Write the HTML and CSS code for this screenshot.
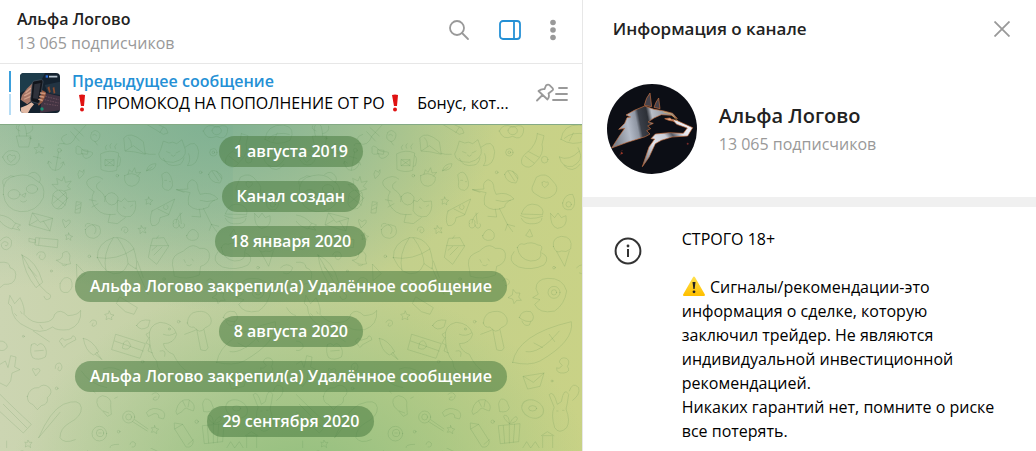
FILE: index.html
```html
<!DOCTYPE html>
<html lang="ru">
<head>
    <meta charset="UTF-8">
    <meta name="viewport" content="width=device-width, initial-scale=1.0">
    <title>Альфа Логово</title>
    <link rel="stylesheet" href="styles.css">
</head>
<body>

    <main class="chat">
        <header class="chat-header">
            <div class="chat-title">
                <h1>Альфа Логово</h1>
                <p class="subscribers">13 065 подписчиков</p>
            </div>
            <div class="chat-actions">
                <button type="button" aria-label="Поиск">
                    <svg width="22" height="22" viewBox="0 0 22 22" fill="none" stroke="#999" stroke-width="1.8" stroke-linecap="round">
                        <circle cx="9" cy="9" r="7"/>
                        <path d="M14 14L20 20"/>
                    </svg>
                </button>
                <button type="button" aria-label="Информация">
                    <svg width="24" height="22" viewBox="0 0 24 22" fill="none" stroke="#2490d5" stroke-width="1.8">
                        <rect x="2" y="2" width="20" height="18" rx="3"/>
                        <path d="M16 2V20"/>
                    </svg>
                </button>
                <button type="button" aria-label="Меню">
                    <svg width="6" height="22" viewBox="0 0 6 22" fill="#999">
                        <circle cx="3" cy="3.5" r="2.8"/>
                        <circle cx="3" cy="11" r="2.8"/>
                        <circle cx="3" cy="18.5" r="2.8"/>
                    </svg>
                </button>
            </div>
        </header>

        <section class="pinned">
            <div class="pinned-marks"><span class="active"></span><span></span></div>
            <svg class="pinned-thumb" width="40" height="40" viewBox="0 0 120 120">
                <rect width="120" height="120" fill="#14222f"/>
                <path d="M0 0H75L60 30L0 60Z" fill="#1d3c4b"/>
                <path d="M74 36L120 26V66L84 60Z" fill="#223443"/>
                <path d="M82 44L88 40L92 56L88 60ZM98 44L103 42L106 60L101 62Z" fill="#8b4c30"/>
                <path d="M68 58L120 70V112L60 120Z" fill="#433443"/>
                <path d="M76 70L116 80M74 80L116 90M72 92L114 98" stroke="#7b5b68" stroke-width="2" stroke-dasharray="5 3"/>
                <path d="M2 80L6 66L22 46L38 30L42 60L38 80L22 94Z" fill="#a87767"/>
                <path d="M18 58L32 46M14 68L32 58M14 78L32 70" stroke="#d2a28d" stroke-width="4" stroke-linecap="round"/>
                <path d="M2 104L22 96L34 88L42 94L32 106L24 120H4Z" fill="#e2b9a4"/>
                <path d="M52 90L58 66L64 50L78 58L76 70L68 86L56 98Z" fill="#96583f"/>
                <path d="M42 24L64 20Q70 20 69 27L59 86Q58 92 52 91L36 86Q31 84 32 78L37 30Q38 25 42 24Z" fill="#12151b" stroke="#4a5663" stroke-width="2"/>
                <path d="M43 34L62 30L54 78L39 76Z" fill="#2f323b"/>
                <path d="M62 60L74 62M60 70L70 72M57 79L66 82" stroke="#cf967c" stroke-width="5" stroke-linecap="round"/>
                <circle cx="66" cy="108" r="5" fill="#1b8e73"/>
                <rect x="77" y="7" width="7" height="7" fill="#2d74df"/>
                <path d="M87 11H112" stroke="#b9c6d1" stroke-width="5"/>
            </svg>
            <div class="pinned-body">
                <h2>Предыдущее сообщение</h2>
                <p><svg class="emoji" width="20" height="18" viewBox="0 0 20 18" fill="#e01212"><path d="M7 1Q10 0 13 1L12 12H9Z"/><circle cx="10" cy="15.5" r="2"/></svg> ПРОМОКОД НА ПОПОЛНЕНИЕ ОТ РО<svg class="emoji" width="20" height="18" viewBox="0 0 20 18" fill="#e01212"><path d="M7 1Q10 0 13 1L12 12H9Z"/><circle cx="10" cy="15.5" r="2"/></svg>&nbsp;&nbsp; Бонус, кот...</p>
            </div>
            <button type="button" aria-label="Закреплённые сообщения">
                <svg width="34" height="20" viewBox="0 0 34 20" fill="none" stroke="#999" stroke-width="1.8" stroke-linejoin="round" stroke-linecap="round">
                    <path d="M11 2.5Q13 .8 14.5 2.2L17.5 5.2Q18.8 6.7 17 7.8L13.5 10.5Q14.8 14 12.5 16.5L3.500 8Q6.5 5.5 9.5 6.2ZM7.5 12L2 17.5"/>
                    <path d="M24 5H32M21 11H32M18 17H32"/>
                </svg>
            </button>
        </section>

        <section class="history">
            <svg class="wallpaper" width="100%" height="100%" aria-hidden="true">
                <defs>
                    <pattern id="doodles" y="-4" width="296" height="327" patternUnits="userSpaceOnUse" viewBox="0 0 888 981">
                        <g fill="none" stroke="#3f7a3c" stroke-opacity=".15" stroke-width="3" stroke-linecap="round" stroke-linejoin="round">
                            <!-- cactus, candy, balloon -->
                            <path d="M50 45H93L86 78H58ZM58 45Q48 10 66 8Q78 6 80 45M80 38Q102 34 98 15M60 30Q44 25 50 14"/>
                            <path d="M190 68Q215 78 228 45L262 8M200 40Q170 50 195 68M222 20L250 45M212 32L238 60M175 74Q170 66 190 68"/>
                            <path d="M275 35Q285 20 300 38Q300 60 285 62Q265 55 275 35M285 62L292 72M278 42Q285 36 290 44"/>
                            <!-- cap, pencil, egg -->
                            <path d="M372 50Q390 28 430 62L436 100Q400 90 376 90ZM376 90L400 74L430 96Q450 102 466 100M385 50Q396 60 394 76"/>
                            <path d="M440 10L490 40L504 36L498 22L452 0M480 34L490 18"/>
                            <path d="M610 30Q620 5 650 18Q690 5 682 34Q675 60 650 46Q620 60 610 30ZM636 28A14 12 0 1 0 664 30A14 12 0 1 0 636 28"/>
                            <path d="M795 55Q800 10 850 12Q890 20 870 58Q830 78 795 55ZM805 52Q830 30 868 40M820 60L832 36"/>
                            <!-- heart bubble, bow, star -->
                            <path d="M8 108Q20 80 52 92Q70 110 46 130Q20 140 8 108ZM22 106Q30 95 36 105Q48 98 46 112L32 124Q20 116 22 106"/>
                            <path d="M117 68L121 79L132 80L124 88L127 98L117 92L107 98L110 88L102 80L113 79Z"/>
                            <path d="M250 88Q225 60 228 90Q225 104 248 98Q250 120 270 108Q290 90 262 92ZM246 86L264 88L262 100L246 98Z"/>
                            <!-- anchor and mug -->
                            <path d="M176 92L166 148M145 122Q148 148 166 148Q186 146 190 124M160 106L182 112M142 128L146 120L154 126M182 128L190 122L194 132"/>
                            <circle cx="178" cy="88" r="6"/>
                            <path d="M303 98Q330 84 356 96L350 148Q326 156 304 146ZM356 104Q366 108 358 134L352 136M316 116H342V134H316ZM316 116L342 134M342 116L316 134M318 86Q312 78 320 72M332 82Q326 72 334 68M346 84Q340 76 350 68"/>
                            <!-- cat -->
                            <path d="M482 86L490 60L506 66Q518 60 530 68L546 56L556 86Q560 114 520 124Q478 124 476 100ZM556 78Q590 50 596 92Q594 136 562 134Q574 118 566 98M490 112Q500 140 534 132Q548 130 552 110M500 92L510 96M528 96L540 90M514 102L520 106L526 102"/>
                            <!-- bottle, bananas, pillow -->
                            <path d="M724 38L744 44L738 70Q746 98 718 124Q700 150 678 130Q670 110 696 92Q722 70 724 38ZM688 106L714 126M698 92L728 108"/>
                            <path d="M790 108Q820 122 850 90Q864 118 830 136Q798 142 790 108ZM804 134Q830 160 852 130M850 90L846 80"/>
                            <path d="M722 168Q750 150 770 180Q792 200 776 220Q750 244 720 220Q700 210 712 190ZM738 184Q744 176 750 184Q760 180 756 192L746 200Q736 194 738 184"/>
                            <circle cx="640" cy="94" r="11"/><circle cx="746" cy="116" r="10"/><circle cx="640" cy="94" r="4"/>
                            <!-- panda -->
                            <path d="M10 220Q5 170 50 164Q86 156 108 178Q138 190 130 230Q110 275 60 272Q16 266 10 220ZM86 160Q106 144 120 168Q124 176 118 184M12 196Q0 174 22 170Q32 160 42 166"/>
                            <ellipse cx="42" cy="220" rx="18" ry="14"/><ellipse cx="96" cy="204" rx="17" ry="13"/>
                            <path d="M66 222L78 216L74 228ZM62 240Q72 248 80 238"/>
                            <!-- pineapple -->
                            <path d="M160 218Q174 198 198 214Q206 246 186 262Q164 270 156 248ZM172 206L156 190L174 190L170 172L186 180L192 166L196 184L214 180L202 196L212 204L192 210M160 224L196 252M178 208L202 232M196 216L160 246M204 230L174 262"/>
                            <!-- strawberry, leaf, avocado -->
                            <path d="M374 164Q396 150 418 168Q420 190 396 196Q370 194 374 164ZM384 160L388 146L396 154L404 140L408 156L422 154L412 166"/>
                            <path d="M440 148Q444 128 468 128Q466 150 440 148ZM440 150L456 138M234 158L238 148L248 154L252 146Q256 160 238 172ZM486 160Q502 144 512 166Q526 200 506 208Q482 208 488 184ZM494 178H500M508 182H512"/>
                            <!-- monkey with kitten -->
                            <path d="M282 212Q250 190 264 176Q290 158 308 174M300 182Q284 190 292 204Q320 220 314 242M282 212Q266 240 290 264Q310 286 346 280M316 226Q336 202 354 228Q356 250 334 252Q314 246 316 226ZM354 238L364 242L374 232L384 242L406 240Q412 270 392 286Q362 292 352 270ZM370 258L376 262M392 256L398 252M330 280L324 304L352 308L376 290M268 236L288 240M276 258L294 248"/>
                            <!-- duck and pizza -->
                            <path d="M530 206L564 204Q558 184 576 176Q594 180 594 204L600 220Q634 210 654 234Q626 242 626 258Q590 276 566 252Q562 230 570 216ZM598 264L602 288L576 286M610 262L634 310L656 316M634 310L628 328M634 310L650 332M530 206L552 214M600 238Q620 246 644 238"/>
                            <path d="M456 270L524 234L506 282L480 290Q478 316 456 314Q446 298 456 270ZM474 264L506 280M492 254A7 7 0 1 0 500 252"/>
                            <!-- sweets and fruit -->
                            <path d="M230 242L244 244L240 276L226 276ZM230 254L242 248M228 266L242 260M446 228L450 236L458 238L452 244L452 252L446 246L438 250L440 240L436 236L444 234Z"/>
                            <path d="M528 306Q530 286 546 276M544 308L540 276M520 308A9 9 0 1 0 536 308A9 9 0 1 0 520 308M538 312A8 8 0 1 0 552 308"/>
                            <path d="M676 278Q690 240 724 252Q746 262 740 280ZM674 284Q700 300 740 286M676 292Q684 312 716 308Q736 306 738 292M764 278L776 290L786 276L796 290L810 284Q816 320 784 322Q762 316 764 278Z"/>
                            <path d="M800 246Q806 218 830 220Q844 250 826 266Q798 270 800 246Z"/><circle cx="818" cy="250" r="8"/>
                            <path d="M626 160Q634 140 654 154Q674 164 660 186Q630 186 626 160ZM636 150L656 180M650 150L664 172"/>
                            <!-- envelope, rocket, peach -->
                            <path d="M98 276L158 292L150 330L88 312ZM98 276L120 304L158 292M88 312L112 298M130 300L150 330"/>
                            <path d="M0 282Q30 286 46 308L36 324Q10 316 0 300M46 306L62 312L52 318L60 328L38 322M188 302Q184 288 198 302Q214 290 210 306L196 320Z"/>
                            <path d="M256 326Q270 302 298 316Q310 344 282 352Q254 352 256 326ZM276 310Q296 320 284 338M270 308Q256 304 256 316"/>
                            <path d="M424 314L429 322L438 320L434 328L438 336L428 332L420 338L420 328L414 322L422 322ZM560 344Q576 310 594 336Q600 360 574 358Q558 354 560 344ZM364 328Q364 316 378 318Q390 328 378 336Q368 334 374 326"/>
                            <!-- tube, spiral, bell -->
                            <path d="M108 350L174 356L172 380L106 372ZM118 352L116 372M88 352L106 356V366L88 362ZM206 336L210 344L218 346L212 350L212 358L206 352L198 356L200 348L196 342L204 342Z"/>
                            <path d="M0 360Q20 336 34 358Q38 380 20 386Q4 386 4 370Q12 356 24 366Q24 376 16 374M110 402Q114 388 132 394Q142 408 128 416Q112 414 120 402"/>
                            <path d="M170 418Q190 416 188 396Q204 384 210 404Q206 418 212 428Q190 436 170 418ZM186 432Q194 438 200 432"/>
                            <!-- ball and cake -->
                            <path d="M292 410Q290 366 340 350Q380 346 400 380Q414 420 408 444L384 428L374 446L360 456Q320 470 292 410ZM340 350Q306 400 318 450M352 350Q384 394 384 428M292 410Q350 420 402 384M408 440L444 520M412 420L430 470"/>
                            <path d="M452 374L458 352L492 350L506 376L470 430L446 410ZM452 374H506M462 402L486 378M456 388L470 376M470 352L476 344"/>
                            <!-- tree, teddy, cone -->
                            <path d="M520 446Q510 410 534 398Q554 390 560 382Q580 366 598 382Q632 378 628 410Q624 430 602 436L598 462Q560 478 524 466ZM552 416L556 424M576 414L580 420M560 432Q570 438 574 430"/>
                            <path d="M664 380Q670 364 684 370Q706 360 726 372Q744 372 734 392Q740 420 704 420Q670 416 664 380ZM654 392Q630 420 668 438Q708 450 744 432Q764 408 738 396"/>
                            <path d="M772 376Q768 350 796 346Q832 346 824 384Q810 396 796 390Q780 400 772 376ZM782 392L806 436L820 390"/>
                            <path d="M702 326L710 346Q700 352 690 344Z"/>
                            <!-- umbrella, egg -->
                            <path d="M66 402Q110 420 128 484L108 500Q72 456 66 402ZM66 402L120 494L142 516Q156 520 150 532Q136 542 132 526M84 438L110 466"/>
                            <path d="M0 424Q30 420 30 440Q52 446 46 472Q40 492 12 490L0 500M180 488Q192 460 212 474Q224 500 204 514Q176 520 180 488M230 430L256 458L232 478Z"/>
                            <!-- cat in a scarf, paw -->
                            <path d="M30 524L44 548L60 530Q76 560 72 580Q96 610 132 604Q160 602 164 580Q180 560 204 584Q236 582 242 568Q246 612 206 626Q170 630 158 618Q120 644 80 618Q36 600 34 556L26 548ZM100 630L148 662M44 578L50 584M62 572L66 578M120 612L128 624"/>
                            <path d="M328 570L332 580L342 582L334 588L336 596L326 592L318 596L320 586L314 580L324 578ZM360 528L412 560L402 580L376 572L350 548ZM270 604Q276 592 288 600Q294 612 280 616Q272 614 280 606M410 614Q420 592 450 598L444 618Q422 632 410 614Z"/>
                            <!-- dino -->
                            <path d="M448 650Q444 612 480 604Q520 606 530 640Q522 668 490 668Q494 690 520 700Q540 740 560 750M448 650Q450 700 470 720Q470 760 520 770M490 640Q510 648 526 636M480 690Q500 684 494 706M448 634L438 640L446 652L438 666L450 672L444 690L458 696"/>
                            <circle cx="508" cy="624" r="3"/>
                            <!-- flower, mushroom, surfboard -->
                            <path d="M562 606Q564 576 590 572Q620 566 632 590Q640 612 616 620Q598 642 582 618Q566 622 562 606ZM590 624L602 686Q620 694 624 680L612 626M554 640L586 628"/>
                            <path d="M670 590Q676 566 704 572Q718 586 708 600Q690 606 670 590ZM678 600Q684 618 700 612L704 602M720 502Q720 474 756 472Q800 470 812 510Q806 550 776 570Q730 580 716 550L732 536L710 530L726 520Z"/>
                            <circle cx="774" cy="514" r="18"/><circle cx="774" cy="514" r="8"/>
                            <path d="M652 506L660 516L672 516L668 528L676 538L662 538L654 548L650 534L636 530L648 522Z"/>
                            <path d="M650 724Q664 640 826 602Q836 660 732 720Q700 736 650 724ZM690 692Q730 700 790 630M714 666L740 680M760 640L776 662"/>
                            <!-- bone, brush, postcard -->
                            <path d="M184 668Q174 660 182 656Q186 646 194 658L214 652Q218 638 226 650Q232 658 220 660L198 672Q192 688 184 668M94 672Q104 662 112 674Q122 662 132 674Q144 690 136 708Q114 720 98 710Q88 694 94 672ZM104 690L130 688"/>
                            <path d="M250 652Q276 656 296 692L280 702Q256 690 250 652ZM286 700L304 714M290 694L306 716M348 640L436 668L420 712L336 686ZM344 660L430 690M372 664Q384 650 392 674Q386 690 368 682Z"/>
                            <path d="M0 660Q20 660 22 678Q14 692 0 688M0 730L16 720L24 740L32 704L48 708L44 738L60 746L36 756L32 780L20 796L0 786M98 748Q94 738 106 746Q120 738 120 750L108 764ZM166 742Q164 726 180 726Q192 738 180 750Q170 748 176 738"/>
                            <!-- duckling, letter -->
                            <path d="M790 722Q794 706 812 712Q824 722 814 736Q826 752 804 756Q780 758 782 740Q790 746 798 734ZM682 766L744 756L732 796L696 804ZM682 766L712 784L744 756"/>
                            <!-- cloud, bow, fishing rod -->
                            <path d="M82 826Q90 798 116 800Q130 786 146 798Q162 814 142 830Q146 850 124 854L112 866L98 850Q82 846 82 826ZM0 820Q40 860 94 910L70 936Q30 900 0 872M10 850L80 920"/>
                            <path d="M116 950Q150 870 190 850Q240 830 244 860Q246 886 208 906Q180 922 180 950Q192 970 226 956M116 950L180 874"/>
                            <!-- bulb, lollipop, candy cane -->
                            <path d="M294 856Q282 830 308 824Q338 830 332 854L334 880L322 886L306 868ZM310 870L326 876M286 816L280 810M344 832L352 828"/>
                            <circle cx="386" cy="888" r="18"/><circle cx="386" cy="888" r="9"/><path d="M398 902L442 930M404 896L444 924"/>
                            <path d="M440 874Q456 854 486 868Q500 880 490 894L476 890Q478 876 462 878L446 886ZM528 870Q536 832 566 836Q590 850 580 870L564 864Q556 856 546 872L532 880ZM548 840L556 856M568 838L564 858"/>
                            <circle cx="298" cy="938" r="22"/><circle cx="300" cy="936" r="11"/><path d="M296 936H304"/>
                            <!-- pencil, gift, donut, rabbit -->
                            <path d="M524 906L548 910L580 960Q578 982 558 978L524 924ZM524 924L548 910M564 970L580 956M608 914L672 908L668 962L614 968ZM622 914L626 966M640 912V966M656 910L652 964M640 908Q616 888 626 882Q640 884 640 908Q660 876 664 892Q664 904 640 908"/>
                            <ellipse cx="710" cy="864" rx="34" ry="26" transform="rotate(25 710 864)"/><ellipse cx="710" cy="862" rx="12" ry="8"/>
                            <path d="M760 820Q772 806 784 850L796 842Q804 796 818 820Q814 850 810 864Q824 900 812 920Q790 942 776 920Q764 880 774 860ZM782 870H786M800 868H804M820 810Q830 780 848 800Q854 820 830 838M608 848Q612 824 632 840L640 860Q636 876 612 872Z"/>
                            <!-- castle and small bits -->
                            <path d="M680 981L692 962L704 981L718 962L730 981M740 981V944H770V981M736 944L754 932L774 944M20 960V981M330 981Q326 970 356 970M84 958L88 964L96 964L90 972L92 980L84 974L76 978L78 968L74 964L82 964Z"/>
                            <path d="M456 820Q470 808 478 824Q474 842 460 836Q458 828 468 828M390 970Q394 956 406 966Q408 980 396 978M464 914L468 922L476 924L470 930L470 938L462 932L454 934L458 926L454 920L462 920Z"/>
                            <path d="M244 750Q270 790 320 800M310 744Q340 730 380 760Q396 776 380 784M620 480Q630 466 640 480Q642 492 628 494M842 440Q860 422 878 440Q870 466 850 456M860 560Q870 580 888 584"/>
                            <g fill="none"><circle cx="90" cy="52" r="3"/><circle cx="352" cy="164" r="4"/><circle cx="602" cy="154" r="4"/><circle cx="268" cy="406" r="4"/><circle cx="154" cy="450" r="3"/><circle cx="492" cy="474" r="4"/><circle cx="70" cy="646" r="3"/><circle cx="428" cy="722" r="4"/><circle cx="170" cy="802" r="4"/><circle cx="356" cy="932" r="4"/><circle cx="590" cy="902" r="5"/><circle cx="774" cy="440" r="4"/><circle cx="536" cy="602" r="4"/><circle cx="768" cy="780" r="3"/></g>
                        </g>
                    </pattern>
                </defs>
                <rect width="100%" height="100%" fill="url(#doodles)"/>
            </svg>
            <div class="messages">
                <span>1 августа 2019</span>
                <span>Канал создан</span>
                <span>18 января 2020</span>
                <span>Альфа Логово закрепил(а) Удалённое сообщение</span>
                <span>8 августа 2020</span>
                <span>Альфа Логово закрепил(а) Удалённое сообщение</span>
                <span>29 сентября 2020</span>
            </div>
        </section>
    </main>

    <aside class="info">
        <header class="info-header">
            <h2>Информация о канале</h2>
            <button type="button" aria-label="Закрыть">
                <svg width="16" height="16" viewBox="0 0 16 16" stroke="#999" stroke-width="1.8">
                    <path d="M.5 .5L15.5 15.5M15.5 .5L.5 15.5"/>
                </svg>
            </button>
        </header>

        <section class="profile">
            <svg class="avatar" width="90" height="90" viewBox="21 18 270 270">
                <defs>
                    <linearGradient id="steel" gradientUnits="userSpaceOnUse" x1="40" y1="150" x2="215" y2="115">
                        <stop offset="0" stop-color="#7d838e"/>
                        <stop offset=".25" stop-color="#b4bbc8"/>
                        <stop offset=".4" stop-color="#8f96a3"/>
                        <stop offset=".46" stop-color="#3b3f48"/>
                        <stop offset=".6" stop-color="#2c3037"/>
                        <stop offset=".68" stop-color="#b9bdc6"/>
                        <stop offset="1" stop-color="#83878f"/>
                    </linearGradient>
                    <linearGradient id="jaw" gradientUnits="userSpaceOnUse" x1="130" y1="262" x2="275" y2="150">
                        <stop offset="0" stop-color="#6b6d75"/>
                        <stop offset=".35" stop-color="#e1e5ee"/>
                        <stop offset=".58" stop-color="#c9cdd6"/>
                        <stop offset=".68" stop-color="#555a65"/>
                        <stop offset=".82" stop-color="#dfe2eb"/>
                        <stop offset="1" stop-color="#f1f3f8"/>
                    </linearGradient>
                </defs>
                <rect x="21" y="18" width="270" height="270" fill="#0c0e15"/>
                <g stroke="#c8703f" stroke-width="2" stroke-linejoin="round">
                    <path d="M133 82Q138 58 150 45L155 86ZM162 88Q168 70 176 60L180 92Z" fill="#45424b"/>
                    <path d="M35 210L58 174L74 151L56 154L74 136L81 119L92 117L78 111L103 97L134 84L162 94L188 98L218 106L232 122L214 112L184 110L162 120L144 132L160 136L143 144L152 152L140 158L150 168L136 176L82 193Z" fill="url(#steel)"/>
                    <path d="M216 124L232 128L278 149L263 174L216 177L184 187L166 197L147 238L127 266L147 207L164 183L153 182L166 168L208 164L250 166L262 150L230 139Z" fill="url(#jaw)"/>
                    <path d="M194 122L210 120L222 130L206 127Z" fill="#e1a98d"/>
                    <path d="M190 102L214 108L226 122L234 130" fill="none" stroke="#eeb457"/>
                </g>
                <circle cx="65" cy="226" r="3" fill="#c5432d"/>
                <circle cx="263" cy="197" r="3" fill="#782a29"/>
                <path d="M58 232L65 226M62 220L68 217" stroke="#5d2827" stroke-width="2"/>
            </svg>
            <div class="profile-name">
                <h1>Альфа Логово</h1>
                <p class="subscribers">13 065 подписчиков</p>
            </div>
        </section>

        <section class="about">
            <svg class="about-icon" width="28" height="28" viewBox="0 0 28 28">
                <circle cx="14" cy="14" r="12.4" fill="none" stroke="#333" stroke-width="2"/>
                <circle cx="14" cy="9" r="1.4" fill="#333"/>
                <rect x="13" y="12" width="2" height="8" fill="#333"/>
            </svg>
            <div class="about-text">
                <p>СТРОГО 18+</p>
                <p class="warning"><svg class="emoji" width="24" height="20" viewBox="0 0 24 20"><defs><linearGradient id="sign" x1="0" y1="0" x2="0" y2="1"><stop offset="0" stop-color="#ffe04d"/><stop offset="1" stop-color="#ffc000"/></linearGradient></defs><path d="M12 1.5L22 19H2Z" fill="url(#sign)" stroke="url(#sign)" stroke-width="2" stroke-linejoin="round"/><path d="M10.5 6H13.5L12.6 13H11.4Z" fill="#222"/><circle cx="12" cy="15.8" r="1.4" fill="#222"/></svg> Сигналы/рекомендации-это информация о сделке, которую заключил трейдер. Не являются индивидуальной инвестиционной рекомендацией.</p>
                <p>Никаких гарантий нет, помните о риске все потерять.</p>
            </div>
        </section>
    </aside>

</body>
</html>
```
FILE: styles.css
```css
* {
    box-sizing: border-box;
}

body {
    display: grid;
    grid-template-columns: 9fr 7fr;
    min-height: 100vh;
    margin: 0;
    background-color: #fff;
    color: #000;
    font-family: 'Open Sans', sans-serif;
    font-size: 16px;
    line-height: 24px;
}

h1, h2, p {
    margin: 0;
}

h1, h2 {
    color: #222;
    font-size: 16px;
    font-weight: 600;
}

button {
    display: flex;
    padding: 0;
    border: none;
    background: none;
    cursor: pointer;
}

.subscribers {
    color: #999;
}

.emoji {
    vertical-align: -3px;
}

/* chat column */
.chat {
    display: flex;
    flex-direction: column;
    min-width: 0;
    border-right: 1px solid #e7e7e7;
}

.chat-header {
    display: flex;
    align-items: center;
    justify-content: space-between;
    height: 64px;
    padding: 0 26px 4px 17px;
    border-bottom: 1px solid #e7e7e7;
}

.chat-title h1 {
    line-height: 26px;
}

.chat-title p {
    line-height: 22px;
}

.chat-actions {
    display: flex;
    align-items: center;
    gap: 28px;
}

.pinned {
    display: flex;
    align-items: center;
    height: 60px;
    padding: 0 13px 2px 9px;
}

.pinned-marks {
    display: flex;
    flex-direction: column;
    gap: 2px;
    margin-right: 9px;
}

.pinned-marks span {
    width: 2px;
    height: 21px;
    background-color: #b5dcf5;
}

.pinned-marks .active {
    background-color: #3a9fdc;
}

.pinned-thumb {
    flex: none;
    margin-right: 12px;
    border-radius: 4px;
}

.pinned-body {
    flex: 1;
    min-width: 0;
    padding-bottom: 2px;
    line-height: 22px;
    white-space: nowrap;
}

.pinned-body h2 {
    color: #2490d5;
}

.history {
    display: grid;
    flex: 1;
    border-top: 1px solid #84aa85;
    background:
        radial-gradient(ellipse 48% 62% at 38% -5%, #7eb092 0%, rgba(126, 176, 146, .55) 50%, rgba(126, 176, 146, 0) 100%),
        radial-gradient(ellipse 50% 60% at 52% 108%, #93bf7e 0%, rgba(147, 191, 126, .5) 50%, rgba(147, 191, 126, 0) 100%),
        linear-gradient(180deg, rgba(130, 178, 148, .5) 0%, rgba(130, 178, 148, 0) 50%) left / 40% 100% no-repeat,
        linear-gradient(90deg, #ccd5b2 0%, #c2d0a0 40%, #c3d08c 70%, #c9d286 100%);
}

.wallpaper,
.messages {
    grid-area: 1 / 1;
}

.wallpaper {
    height: 0;
    min-height: 100%;
}

.messages {
    display: flex;
    flex-direction: column;
    align-items: center;
    gap: 14px;
    padding: 11px 0 12px;
    z-index: 1;
}

.messages span {
    padding: 3px 15px 4px;
    border-radius: 16px;
    background-color: rgba(74, 124, 65, .55);
    color: #fff;
    font-weight: 600;
}

/* info column */
.info-header {
    display: flex;
    align-items: center;
    justify-content: space-between;
    height: 58px;
    padding: 0 26px 0 30px;
}

.info-header h2 {
    font-size: 17px;
}

.profile {
    display: flex;
    align-items: center;
    gap: 22px;
    padding: 26px 24px 23px;
    border-bottom: 10px solid #f0f0f0;
}

.profile-name {
    padding-bottom: 2px;
}

.profile h1 {
    font-size: 20px;
    line-height: 32px;
}

.avatar {
    flex: none;
    border-radius: 50%;
}

.about {
    display: flex;
    gap: 40px;
    padding: 20px 40px 0 31px;
}

.about-icon {
    flex: none;
    margin-top: 10px;
}

.about .warning {
    margin-top: 24px;
}
```
